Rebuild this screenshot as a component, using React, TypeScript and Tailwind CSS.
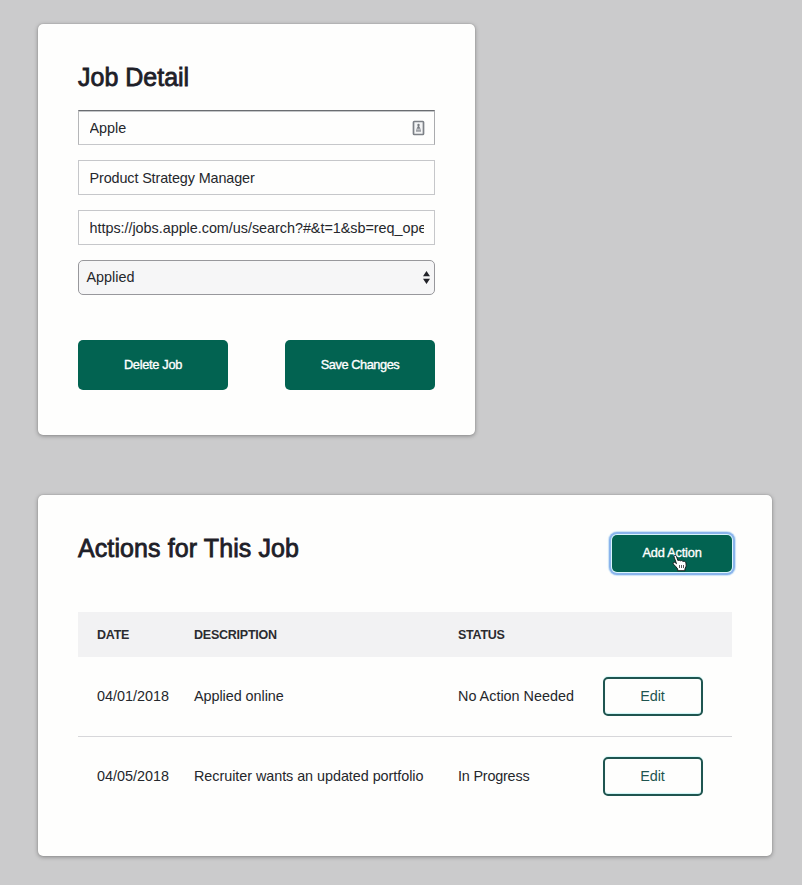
import React from "react";

const actions = [
  { date: "04/01/2018", description: "Applied online", status: "No Action Needed", tracking: "tracking-normal" },
  { date: "04/05/2018", description: "Recruiter wants an updated portfolio", status: "In Progress", tracking: "tracking-[-0.05px]" },
];

const card = "rounded-[5px] bg-[#fefefd] px-10 shadow-[0_0_1px_#888,0_1px_4px_rgba(0,0,0,0.35)]";
const field = "h-[35px] w-full overflow-hidden border border-[#c6c7ca] bg-[#fefefd] px-[10.5px] text-[14.4px] text-[#25272c] outline-none";
const solidButton = "flex items-center justify-center rounded-[5px] bg-[#026351] text-[12.8px] text-white [-webkit-text-stroke:0.35px_white]";
const heading = "text-[25px] leading-[30px] text-[#1e2028] [-webkit-text-stroke:0.8px_#1e2028]";
const columns = "grid grid-cols-[97px_264px_145px_100px] items-center pl-[19px]";

function ContactIcon() {
  return (
    <svg className="absolute right-[10px] top-[10px]" width="13" height="16" viewBox="0 0 13 16">
      <rect x="1.5" y="1.5" width="10" height="13" rx="0.7" fill="#f3f4f5" stroke="#7d8187" strokeWidth="1.7" />
      <circle cx="6.5" cy="5" r="1.2" fill="#777b80" />
      <path d="M6.5 5 8.5 8.8h-4Z" fill="#777b80" />
      <path d="M4 9.3h5v2.5H4z" fill="#a0a3a8" />
    </svg>
  );
}

function HandCursor() {
  return (
    <svg className="absolute left-[60px] top-[19px]" width="16" height="18" viewBox="0 0 16 18">
      <path
        d="M5.7 16.7V15L4 12.8 1.4 10.1C.5 8.8 1.9 7.6 3.2 8.6L4.5 9.7 2.5 4.2 2 2.5C2 1 3.9 1 4.4 2.4L6 6.7C6.7 5.8 8 6.1 8.4 7 9.2 6.2 10.5 6.5 10.9 7.5 12.2 6.7 13.7 7.6 13.9 8.8L14.2 12 12.9 15V16.7Z"
        fill="white"
        stroke="#111"
        strokeWidth="0.9"
        strokeLinejoin="round"
      />
      <path d="M7.5 11v3M9.5 11v3M11.5 11v3" stroke="#111" strokeWidth="0.7" />
    </svg>
  );
}

export default function App() {
  return (
    <main className="flex h-[885px] w-[802px] flex-col items-start overflow-hidden bg-[#cbcbcc] pl-[38px] pt-6 font-['Liberation_Sans',Arial,sans-serif]">
      <section className={`${card} h-[411px] w-[437px] pt-[38px]`}>
        <h2 className={heading}>Job Detail</h2>
        <div className="mt-[18px] flex flex-col gap-[15px]">
          <div className="relative">
            <input aria-label="Company" className={`${field} block border-t-[#6a6d71] border-l-[#b5b6b8] border-r-[#aaabae] shadow-[inset_0_1px_0_#c4c6c8]`} defaultValue="Apple" />
            <ContactIcon />
          </div>
          <input aria-label="Title" className={`${field} tracking-[-0.12px]`} defaultValue="Product Strategy Manager" />
          <input aria-label="Link" className={`${field} tracking-[-0.03px]`} defaultValue="https://jobs.apple.com/us/search?#&t=1&sb=req_open" />
          <div className="flex h-[35px] items-center justify-between rounded-[5px] border border-[#98989c] bg-[#f6f6f7] pl-[7.5px] pr-1 text-[14.4px] text-[#25272c]">
            <span>Applied</span>
            <svg width="7" height="13" viewBox="0 0 7 13" fill="#222329">
              <path d="M3.5 0 7 5.2H0ZM0 7.8H7L3.5 13Z" />
            </svg>
          </div>
        </div>
        <div className="mt-[45px] flex justify-between">
          <button className={`${solidButton} h-[50px] w-[150px] tracking-[-0.3px]`}>Delete Job</button>
          <button className={`${solidButton} h-[50px] w-[150px] tracking-[-0.44px]`}>Save Changes</button>
        </div>
      </section>

      <section className={`${card} mt-[60px] h-[361px] w-[734px] pt-[38px]`}>
        <div className="flex h-[39px] items-start justify-between">
          <h2 className={`${heading} tracking-[0.1px]`}>Actions for This Job</h2>
          <button className={`${solidButton} relative mt-[2px] h-[37px] w-[120px] pb-[2px] tracking-[-0.2px] shadow-[0_0_0_1px_#d9f5fb,0_0_0_3px_#8ab4ec,0_0_1px_4px_#cbe3f6]`}>
            Add Action
            <HandCursor />
          </button>
        </div>
        <div className="mt-10 w-[654px]">
          <div className={`${columns} h-[45px] bg-[#f2f2f3] pt-[1px] text-[12.5px] font-bold tracking-[-0.24px] text-[#2b2b30]`}>
            <span>DATE</span>
            <span>DESCRIPTION</span>
            <span>STATUS</span>
          </div>
          {actions.map((action) => (
            <div key={action.date} className={`${columns} h-20 border-b border-[#d7d7da] text-[14.4px] text-[#25272c] last:h-[79px] last:border-b-0`}>
              <span>{action.date}</span>
              <span className="tracking-[-0.05px]">{action.description}</span>
              <span className={action.status === "In Progress" ? "tracking-[-0.2px]" : action.tracking}>{action.status}</span>
              <button className="h-[39px] w-[100px] rounded-[5px] border-2 border-[#1f5550] pr-[1px] tracking-[-0.1px] text-[#1f5550] shadow-[0_-1px_1px_#d5fafa,inset_0_-1px_1px_#c9f5f5]">Edit</button>
            </div>
          ))}
        </div>
      </section>
    </main>
  );
}
